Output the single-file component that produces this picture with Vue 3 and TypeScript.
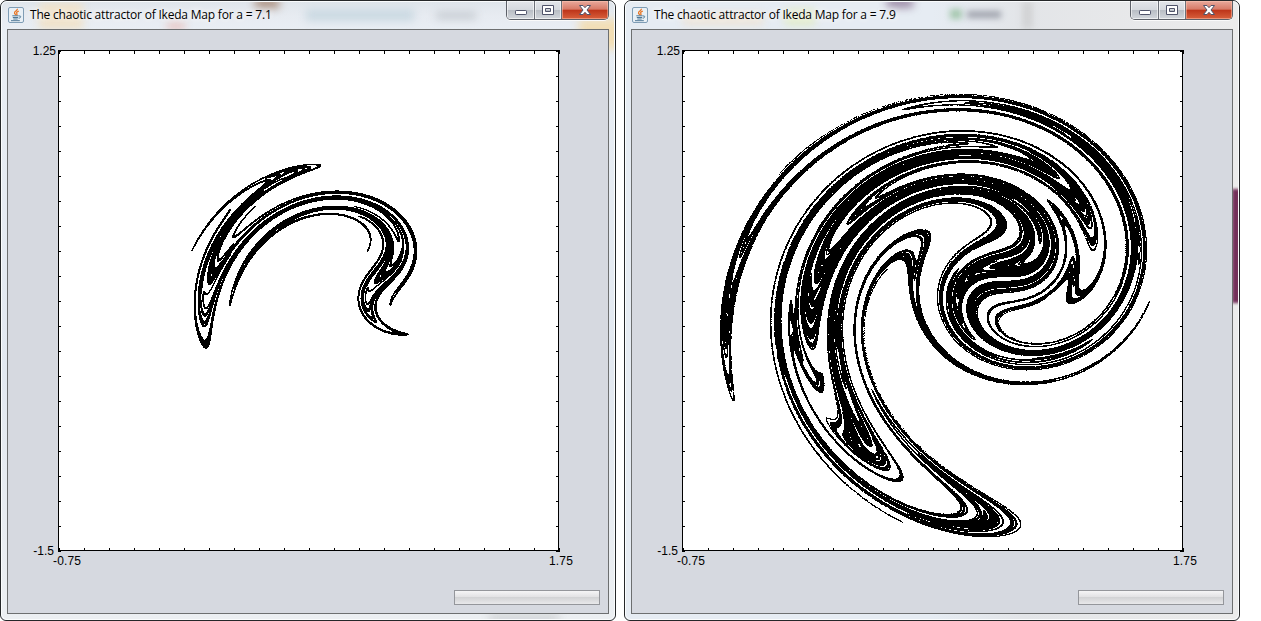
<script setup lang="ts">
import { onMounted, ref } from 'vue'

interface Plot {
  a: number
  title: string
  key: string
}

const plots: Plot[] = [
  { a: 7.1, title: 'The chaotic attractor of Ikeda Map for a = 7.1', key: 'first' },
  { a: 7.9, title: 'The chaotic attractor of Ikeda Map for a = 7.9', key: 'second' },
]

const SIZE = 502
const POINTS = 1600000
const TRANSIENT = 2000
const canvases = ref<HTMLCanvasElement[]>([])

function drawIkeda(canvas: HTMLCanvasElement, a: number) {
  const ctx = canvas.getContext('2d')
  if (!ctx) return
  ctx.fillStyle = '#fff'
  ctx.fillRect(0, 0, 501, 501)
  const image = ctx.getImageData(0, 0, SIZE, SIZE)
  const pixels = new Uint32Array(image.data.buffer)
  let x = 0.1
  let y = 0.1
  for (let i = 0; i < POINTS; i++) {
    const t = 0.4 - a / (1 + x * x + y * y)
    const c = Math.cos(t)
    const s = Math.sin(t)
    const nx = 0.84 + 0.9 * (x * c - y * s)
    const ny = 0.9 * (x * s + y * c)
    x = nx
    y = ny
    if (i < TRANSIENT) continue
    const px = Math.floor(1 + (x + 0.75) * 200)
    const py = Math.floor(1 + ((1.25 - y) * 500) / 2.75)
    if (px >= 0 && px < 500 && py >= 0 && py < 500) pixels[py * SIZE + px] = 0xff000000
  }
  ctx.putImageData(image, 0, 0)
  ctx.fillStyle = '#000'
  ctx.fillRect(0, 0, 501, 1)
  ctx.fillRect(0, 500, 501, 1)
  ctx.fillRect(0, 0, 1, 501)
  ctx.fillRect(500, 0, 1, 501)
  for (let k = 0; k <= 20; k++) {
    const p = 1 + k * 25
    ctx.fillRect(p, 0, 1, 4)
    ctx.fillRect(p, 498, 1, 3)
    ctx.fillRect(0, p, 3, 1)
    ctx.fillRect(498, p, 3, 1)
  }
  ctx.fillRect(500, 499, 2, 3)
  ctx.fillRect(499, 500, 3, 2)
}

onMounted(() => {
  canvases.value.forEach((c, i) => drawIkeda(c, plots[i].a))
})
</script>

<template>
  <main class="desktop">
    <section v-for="p in plots" :key="p.key" class="window" :class="p.key">
      <div class="glass"><i v-for="n in 7" :key="n" :class="'b' + n"></i></div>
      <header class="bar">
        <svg class="java" viewBox="0 0 16 16" width="16" height="16">
          <rect x=".5" y=".5" width="15" height="15" rx="1.5" fill="#e9f0f6" stroke="#7f9db5" />
          <path d="M9.300 1.800c.8 1.800-3.200 2.600-2.800 4.200.2.9 1.200 1.400 1.300 2.200M10.800 4.200C8.400 5 8.200 5.800 8.900 6.700c.4.6 0 1.200-.4 1.500" fill="none" stroke="#e8792b" stroke-width="1.300" />
          <path d="M4.300 8.800h6.400M4.800 10.500h5.400M5.300 12h4.400M3 13.700h8.800M11 9c2.500-.5 2.200 1.900-.3 2.300" fill="none" stroke="#4f7896" />
        </svg>
        <h1>{{ p.title }}</h1>
        <div class="controls">
          <span class="min"><svg width="14" height="14"><rect x="1.500" y="7.500" width="11" height="4" rx=".7" fill="#fff" stroke="#50546a" /></svg></span>
          <span class="max"><svg width="14" height="14"><path d="M1.500 2.500h11v9h-11zM4.500 5.500v3h5v-3z" fill="#fff" fill-rule="evenodd" stroke="#50546a" /></svg></span>
          <span class="close"><svg width="14" height="14"><path d="M1.500 2.500h3.500l2 2.200 2-2.200h3.500l-3.500 4.500 3.500 4.500H9L7 9.300 5 11.500H1.500L5 7z" fill="#fff" stroke="#50546a" /></svg></span>
        </div>
      </header>
      <div class="content">
        <div class="row">
          <div class="ylabels"><span>1.25</span><span class="low">-1.5</span></div>
          <canvas ref="canvases" :width="SIZE" :height="SIZE"></canvas>
        </div>
        <div class="xlabels"><span>-0.75</span><span>1.75</span></div>
        <div class="progress"></div>
      </div>
    </section>
  </main>
</template>

<style>
body { margin: 0; background: #fff; }
</style>

<style scoped>
.desktop { width: 1261px; height: 621px; display: flex; gap: 8px; background: #fff; overflow: hidden; }
.window { box-sizing: border-box; position: relative; flex: none; width: 616px; height: 621px; border: 1px solid #252729; border-radius: 7px 7px 6px 6px; padding: 0 6px 6px; background: #e8edf3; overflow: hidden; }
.glass { position: absolute; inset: 0; overflow: hidden; border-radius: 6px; background: linear-gradient(#dfe5eb, #e7ebf1 14px, #e9eef4 28px, #e2e8f0 60%, #eceff2); }
.glass::after { content: ""; position: absolute; inset: 0; border: 1px solid #fafcfd; border-radius: 6px; }
.glass i { position: absolute; filter: blur(4px); }
.first .b1 { left: 38px; top: 2px; width: 44px; height: 26px; background: #f0e2c8; }
.first .b2 { left: 166px; top: 21px; width: 18px; height: 8px; background: #e8c5c2; }
.first .b3 { left: 254px; top: -2px; width: 24px; height: 9px; background: #a88a78; }
.first .b4 { left: 305px; top: 8px; width: 108px; height: 12px; background: #cad9e2; }
.first .b5 { left: 435px; top: 11px; width: 40px; height: 7px; background: #c4cad0; }
.first .b6 { left: 578px; top: 18px; width: 50px; height: 30px; background: #f2deb5; }
.first .b7 { left: 488px; top: 613px; width: 70px; height: 8px; background: #d0d3d5; }
.second .glass { background: linear-gradient(90deg, #e6ecf3 0 50%, #e3e5e8 65%, #ececec); }
.second .b1 { left: 58px; top: 12px; width: 80px; height: 12px; background: #eee4d6; }
.second .b2 { left: 160px; top: 8px; width: 30px; height: 16px; background: #e2ecc6; }
.second .b3 { left: 262px; top: -2px; width: 26px; height: 8px; background: #8e7797; }
.second .b4 { left: 325px; top: 8px; width: 12px; height: 10px; background: #a4c7ae; filter: blur(3px); }
.second .b5 { left: 342px; top: 10px; width: 34px; height: 7px; background: #9da1ab; filter: blur(3px); }
.second .b6 { left: 400px; top: 0; width: 5px; height: 28px; background: #bfbfbf; }
.second .b7 { left: 607px; top: 188px; width: 12px; height: 114px; background: #74305a; filter: blur(1.5px); }
.bar { position: relative; height: 28px; display: flex; align-items: flex-start; }
.java { margin: 6px 0 0 1px; flex: none; }
h1 { margin: 6px 0 0 6px; font: 400 12px/16px "Open Sans", "Noto Sans", sans-serif; letter-spacing: -.2px; color: #000; white-space: nowrap; flex: 1; text-shadow: 0 0 6px #fff, 0 0 8px #fff; }
.controls { display: flex; height: 18px; border: 1px solid #5c6068; border-top: 0; border-radius: 0 0 5px 5px; overflow: hidden; box-shadow: 0 1px 0 #fafafa; }
.controls span { display: flex; align-items: center; justify-content: center; border-right: 1px solid #6c7078; background: linear-gradient(#e3e6ea, #d5d9de 48%, #b8bdc4 50%, #d3d7dc); box-shadow: inset 0 0 0 1px rgba(255,255,255,.6); }
.controls svg { display: block; }
.min { width: 27px; }
.max { width: 26px; }
.controls .close { width: 46px; border: 0; background: linear-gradient(#e8a99c, #d77a67 46%, #bd3419 50%, #d8603c); box-shadow: inset 0 0 0 1px rgba(255,200,180,.5); }
.content { position: relative; box-sizing: border-box; height: 585px; border: 1px solid #6d6f70; background: #d6d9e0; display: flex; flex-direction: column; font: 12px/14px "Liberation Sans", Arial, sans-serif; color: #000; }
.row { display: flex; margin-top: 20px; height: 502px; }
.ylabels { width: 50px; box-sizing: border-box; display: flex; flex-direction: column; justify-content: space-between; text-align: right; padding-right: 2px; margin-top: -6px; height: 514px; }
.ylabels .low { padding-right: 2px; }
canvas { display: block; }
.xlabels { display: flex; justify-content: space-between; padding: 0 35px 0 45px; margin-top: 2px; letter-spacing: .15px; }
.progress { box-sizing: border-box; width: 146px; height: 15px; margin: 22px 8px 0 auto; border: 1px solid #94969b; background: linear-gradient(#f5f5f6, #e2e2e4 45%, #d2d3d5 50%, #e8e8ea); }
</style>
